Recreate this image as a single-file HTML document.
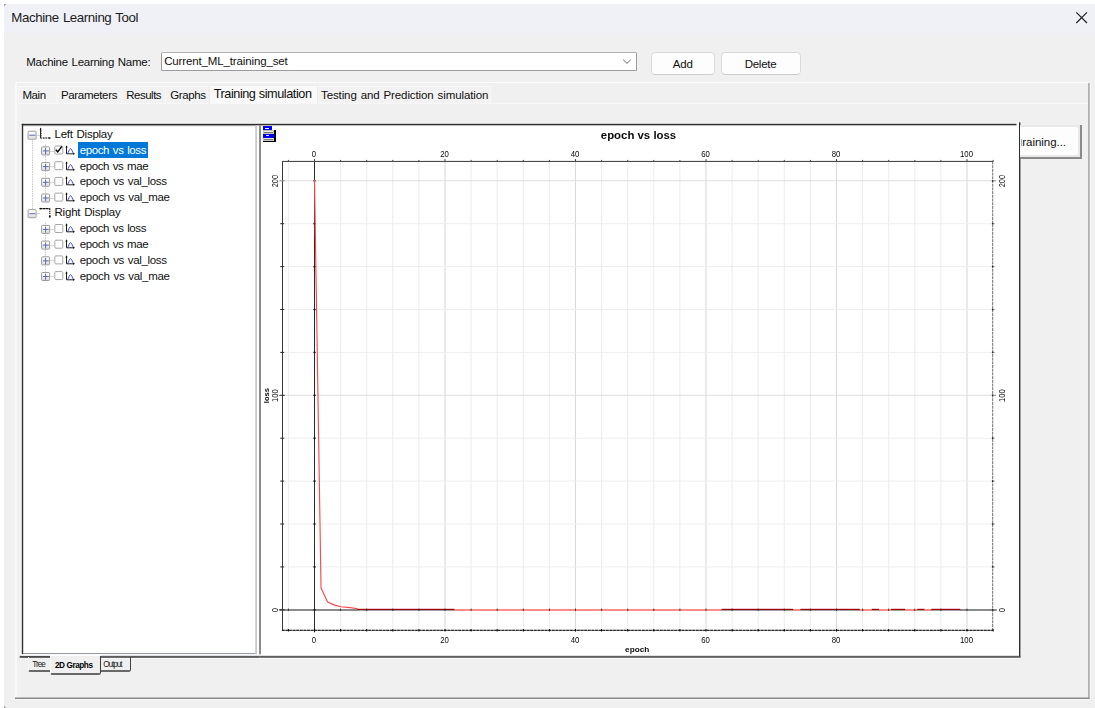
<!DOCTYPE html>
<html><head><meta charset="utf-8"><title>Machine Learning Tool</title>
<style>
html,body{margin:0;padding:0;background:#fff;}
body{width:1095px;height:708px;position:relative;overflow:hidden;font-family:"Liberation Sans",sans-serif;}
.a{position:absolute;}
.t{position:absolute;white-space:pre;line-height:1;}
.win{position:absolute;left:4px;top:4px;width:1091px;height:704px;background:#f0f0f0;border-radius:0;}
.title{position:absolute;left:4px;top:4px;width:1091px;height:29px;background:#f0f1f7;}
.btn{position:absolute;background:#fdfdfd;border:1px solid #d9d9d9;border-bottom-color:#cccccc;border-radius:4.5px;box-sizing:border-box;}
.tab{position:absolute;top:86px;height:17px;box-sizing:border-box;border:1px solid #f8f8f8;border-bottom:none;background:#f2f2f2;}
.xb{position:absolute;width:9px;height:9px;box-sizing:border-box;border:1px solid #9b9b9b;border-radius:1.2px;background:linear-gradient(#ffffff 0%,#f4f4f4 50%,#dcdcdc 100%);}
.cb{position:absolute;width:9px;height:9px;box-sizing:border-box;border:1px solid #a6a6a6;border-radius:1.5px;background:#fff;}
</style></head><body>
<div class="win"></div>
<div class="title"></div>
<div class="t" style="left:11.30px;top:10.64px;font-size:13.3px;letter-spacing:-0.409px;color:#1b1b1b;word-spacing:0.9px;">Machine Learning Tool</div><svg class="a" style="left:1074px;top:10px" width="16" height="16" viewBox="0 0 16 16"><path d="M2.3 2.3 L13 13 M13 2.3 L2.3 13" stroke="#1f1f1f" stroke-width="1.15" fill="none"/></svg><div class="t" style="left:26.30px;top:57.37px;font-size:11.5px;letter-spacing:-0.286px;color:#101010;word-spacing:0.9px;">Machine Learning Name:</div><div class="a" style="left:161px;top:52px;width:476px;height:19px;box-sizing:border-box;background:#fff;border:1px solid #9c9c9c;border-top-color:#b2b2b2;border-radius:1.5px;"></div><div class="t" style="left:164.20px;top:55.67px;font-size:11.5px;letter-spacing:-0.138px;color:#101010;">Current_ML_training_set</div><svg class="a" style="left:621px;top:56px" width="12" height="10" viewBox="0 0 12 10"><path d="M2.2 3.7 L6 7.4 L9.8 3.7" stroke="#5c5c5c" stroke-width="0.95" fill="none"/></svg><div class="btn" style="left:650.5px;top:52px;width:64px;height:22.6px;"></div><div class="t" style="left:672.70px;top:58.87px;font-size:11.5px;letter-spacing:-0.121px;color:#101010;">Add</div><div class="btn" style="left:721px;top:52px;width:79.5px;height:22.6px;"></div><div class="t" style="left:744.70px;top:58.87px;font-size:11.5px;letter-spacing:-0.257px;color:#101010;">Delete</div><div class="a" style="left:15px;top:82px;width:1074px;height:1px;background:#fbfbfb;"></div><div class="a" style="left:15px;top:82px;width:2px;height:617px;background:#f9f9f9;"></div><div class="a" style="left:17px;top:103px;width:1071px;height:1px;background:#f7f7f7;"></div><div class="tab" style="left:18px;width:39.3px;"></div><div class="t" style="left:22.40px;top:89.87px;font-size:11.5px;letter-spacing:-0.407px;color:#101010;">Main</div><div class="tab" style="left:56.3px;width:65.7px;"></div><div class="t" style="left:60.90px;top:89.87px;font-size:11.5px;letter-spacing:-0.324px;color:#101010;">Parameters</div><div class="tab" style="left:121px;width:45.30000000000001px;"></div><div class="t" style="left:126.20px;top:89.87px;font-size:11.5px;letter-spacing:-0.492px;color:#101010;">Results</div><div class="tab" style="left:165.3px;width:44.69999999999999px;"></div><div class="t" style="left:170.20px;top:89.87px;font-size:11.5px;letter-spacing:-0.385px;color:#101010;">Graphs</div><div class="tab" style="left:317px;width:174px;"></div><div class="t" style="left:321.00px;top:89.87px;font-size:11.5px;letter-spacing:-0.107px;color:#101010;word-spacing:0.9px;">Testing and Prediction simulation</div><div class="tab" style="left:209px;top:84.5px;width:108.5px;height:19.5px;background:#f9f9f9;border-color:#ececec;"></div><div class="t" style="left:213.70px;top:87.85px;font-size:12.7px;letter-spacing:-0.448px;color:#101010;word-spacing:0.3px;">Training simulation</div><div class="a" style="left:21px;top:124px;width:236px;height:530px;background:#fff;"></div><div class="a" style="left:257px;top:124px;width:762px;height:532px;background:#fff;"></div><svg class="a" style="left:0;top:0" width="1095" height="708" viewBox="0 0 1095 708"><rect x="20.3" y="122.6" width="998.5" height="1.2" fill="#f9f9f9"/><rect x="20.3" y="122.6" width="1.4" height="533" fill="#f9f9f9"/><rect x="21.7" y="123.8" width="994.8" height="1.5" fill="#2e2e2e"/><rect x="23" y="125.3" width="234" height="0.8" fill="#8a8a8a"/><rect x="21.8" y="123.8" width="1.4" height="530.4" fill="#2e2e2e"/><rect x="23" y="653.1" width="233.8" height="1.1" fill="#8c929c"/><rect x="21" y="654.2" width="238" height="1.8" fill="#ffffff"/><rect x="255.2" y="125.3" width="1.8" height="528.8" fill="#c6c9d2"/><rect x="259.0" y="125.3" width="2.0" height="529" fill="#8c8c8c"/><rect x="1019.0" y="122.4" width="1.4" height="535" fill="#2e2e2e"/><rect x="259.2" y="655.8" width="761.2" height="2.1" fill="#5e5e5e"/><rect x="101" y="657.9" width="919" height="1.0" fill="#f8f8f8"/><rect x="1088.4" y="83" width="1.3" height="616" fill="#8a8a8a"/><rect x="15" y="697.5" width="1074.7" height="1.6" fill="#8a8a8a"/><rect x="15" y="699.1" width="1075.7" height="1.0" fill="#f7f7f7"/><rect x="1089.7" y="83" width="1.0" height="617" fill="#f7f7f7"/><path d="M4 4H6.6L4 6.6Z" fill="#a4a4a4"/><path d="M4 708V705.4L6.2 708Z" fill="#a4a4a4"/><rect x="19.7" y="655.9" width="30.6" height="1.9" fill="#484848"/><rect x="100.8" y="655.8" width="158.4" height="2.1" fill="#5e5e5e"/></svg><svg class="a" style="left:31px;top:0" width="3" height="708"><line x1="1.5" y1="140.30" x2="1.5" y2="209.80" stroke="#cacaca" stroke-width="1" stroke-dasharray="1.5 0.9"/></svg><svg class="a" style="left:44px;top:0" width="3" height="708"><line x1="1.5" y1="144.30" x2="1.5" y2="198.10" stroke="#cacaca" stroke-width="1" stroke-dasharray="1.5 0.9"/></svg><svg class="a" style="left:44px;top:0" width="3" height="708"><line x1="1.5" y1="222.80" x2="1.5" y2="276.60" stroke="#cacaca" stroke-width="1" stroke-dasharray="1.5 0.9"/></svg><div class="a" style="left:37px;top:134.80px;width:3px;height:1px;background:#d6d6d6;"></div><div class="xb" style="left:27px;top:130px;transform:translate(0.60px,0.70px);"></div><div class="a" style="left:29px;top:134px;transform:translate(0.30px,0.70px);width:5.6px;height:1px;background:#5a69b2;"></div><svg class="a" style="left:38px;top:127.10px" width="15" height="13" viewBox="0 0 15 13"><path d="M2.6 1.2V11.1" stroke="#111" stroke-width="1" fill="none"/><path d="M2.6 11.1H12" stroke="#111" stroke-width="1" fill="none" stroke-dasharray="1.7 0.7"/><path d="M1.7 2.5L2.6 0.6L3.5 2.5Z M11.1 10.1L13.2 11.1L11.1 12.1Z" fill="#111"/><path d="M3.1 4h.8M3.1 6.4h.8M3.1 8.8h.8" stroke="#222" stroke-width="0.7"/><path d="M5.6 10.2v.5M8 10.2v.5M10.4 10.2v.5" stroke="#222" stroke-width="0.8"/></svg><div class="t" style="left:54.50px;top:128.97px;font-size:11.5px;letter-spacing:-0.249px;color:#101010;word-spacing:0.9px;">Left Display</div><div class="a" style="left:50px;top:150.50px;width:4px;height:1px;background:#d6d6d6;"></div><div class="xb" style="left:41px;top:146px;transform:translate(0.10px,0.40px);"></div><div class="a" style="left:42px;top:150px;transform:translate(0.80px,0.40px);width:5.6px;height:1px;background:#5a69b2;"></div><div class="a" style="left:45px;top:148px;transform:translate(0.10px,0.10px);width:1px;height:5.6px;background:#5a69b2;"></div><div class="cb" style="left:54px;top:145px;transform:translate(0.30px,0.50px);"></div><svg class="a" style="left:54.2px;top:145.30px" width="10" height="10" viewBox="0 0 10 10"><path d="M1.8 4.7L3.7 6.9L7.9 1.4" stroke="#000" stroke-width="1.45" fill="none"/></svg><div class="a" style="left:78px;top:142.10px;width:69.8px;height:15.8px;background:#0078d7;"></div><svg class="a" style="left:64px;top:144.90px" width="12" height="11" viewBox="0 0 12 11"><path d="M3.4 8.4 C4.6 7.6 5.4 3.6 6.6 3.6 C7.8 3.6 8.4 7.4 9.4 8.2" stroke="#3a3aff" stroke-width="0.95" fill="none"/><path d="M2.5 1.2V8.8H10" stroke="#151515" stroke-width="0.95" fill="none"/><path d="M1.35 2.5L2.5 0.3L3.65 2.5Z M9.1 7.75L11.1 8.8L9.1 9.85Z" fill="#111"/></svg><div class="t" style="left:79.70px;top:144.92px;font-size:11.5px;letter-spacing:-0.390px;color:#fff;word-spacing:0.9px;">epoch vs loss</div><div class="a" style="left:50px;top:166.20px;width:4px;height:1px;background:#d6d6d6;"></div><div class="xb" style="left:41px;top:162px;transform:translate(0.10px,0.10px);"></div><div class="a" style="left:42px;top:166px;transform:translate(0.80px,0.10px);width:5.6px;height:1px;background:#5a69b2;"></div><div class="a" style="left:45px;top:163px;transform:translate(0.10px,0.80px);width:1px;height:5.6px;background:#5a69b2;"></div><div class="cb" style="left:54px;top:161px;transform:translate(0.30px,0.20px);"></div><svg class="a" style="left:64px;top:160.60px" width="12" height="11" viewBox="0 0 12 11"><path d="M3.4 8.4 C4.6 7.6 5.4 3.6 6.6 3.6 C7.8 3.6 8.4 7.4 9.4 8.2" stroke="#3a3aff" stroke-width="0.95" fill="none"/><path d="M2.5 1.2V8.8H10" stroke="#151515" stroke-width="0.95" fill="none"/><path d="M1.35 2.5L2.5 0.3L3.65 2.5Z M9.1 7.75L11.1 8.8L9.1 9.85Z" fill="#111"/></svg><div class="t" style="left:79.70px;top:160.62px;font-size:11.5px;letter-spacing:-0.408px;color:#101010;word-spacing:0.9px;">epoch vs mae</div><div class="a" style="left:50px;top:181.90px;width:4px;height:1px;background:#d6d6d6;"></div><div class="xb" style="left:41px;top:177px;transform:translate(0.10px,0.80px);"></div><div class="a" style="left:42px;top:181px;transform:translate(0.80px,0.80px);width:5.6px;height:1px;background:#5a69b2;"></div><div class="a" style="left:45px;top:179px;transform:translate(0.10px,0.50px);width:1px;height:5.6px;background:#5a69b2;"></div><div class="cb" style="left:54px;top:176px;transform:translate(0.30px,0.90px);"></div><svg class="a" style="left:64px;top:176.30px" width="12" height="11" viewBox="0 0 12 11"><path d="M3.4 8.4 C4.6 7.6 5.4 3.6 6.6 3.6 C7.8 3.6 8.4 7.4 9.4 8.2" stroke="#3a3aff" stroke-width="0.95" fill="none"/><path d="M2.5 1.2V8.8H10" stroke="#151515" stroke-width="0.95" fill="none"/><path d="M1.35 2.5L2.5 0.3L3.65 2.5Z M9.1 7.75L11.1 8.8L9.1 9.85Z" fill="#111"/></svg><div class="t" style="left:79.70px;top:176.32px;font-size:11.5px;letter-spacing:-0.328px;color:#101010;word-spacing:0.9px;">epoch vs val_loss</div><div class="a" style="left:50px;top:197.60px;width:4px;height:1px;background:#d6d6d6;"></div><div class="xb" style="left:41px;top:193px;transform:translate(0.10px,0.50px);"></div><div class="a" style="left:42px;top:197px;transform:translate(0.80px,0.50px);width:5.6px;height:1px;background:#5a69b2;"></div><div class="a" style="left:45px;top:195px;transform:translate(0.10px,0.20px);width:1px;height:5.6px;background:#5a69b2;"></div><div class="cb" style="left:54px;top:192px;transform:translate(0.30px,0.60px);"></div><svg class="a" style="left:64px;top:192.00px" width="12" height="11" viewBox="0 0 12 11"><path d="M3.4 8.4 C4.6 7.6 5.4 3.6 6.6 3.6 C7.8 3.6 8.4 7.4 9.4 8.2" stroke="#3a3aff" stroke-width="0.95" fill="none"/><path d="M2.5 1.2V8.8H10" stroke="#151515" stroke-width="0.95" fill="none"/><path d="M1.35 2.5L2.5 0.3L3.65 2.5Z M9.1 7.75L11.1 8.8L9.1 9.85Z" fill="#111"/></svg><div class="t" style="left:79.70px;top:192.02px;font-size:11.5px;letter-spacing:-0.281px;color:#101010;word-spacing:0.9px;">epoch vs val_mae</div><div class="a" style="left:37px;top:213.30px;width:3px;height:1px;background:#d6d6d6;"></div><div class="xb" style="left:27px;top:209px;transform:translate(0.60px,0.20px);"></div><div class="a" style="left:29px;top:213px;transform:translate(0.30px,0.20px);width:5.6px;height:1px;background:#5a69b2;"></div><svg class="a" style="left:38px;top:205.60px" width="15" height="14" viewBox="0 0 15 14"><path d="M2 2.6H11.8" stroke="#111" stroke-width="1.15" fill="none" stroke-dasharray="2.6 0.35"/><path d="M11.8 2.6V10.6" stroke="#111" stroke-width="1.15" fill="none" stroke-dasharray="1.3 0.8"/><circle cx="2.2" cy="2.6" r="0.85" fill="#111"/><circle cx="11.8" cy="10.8" r="1" fill="#111"/></svg><div class="t" style="left:54.50px;top:207.47px;font-size:11.5px;letter-spacing:-0.204px;color:#101010;word-spacing:0.9px;">Right Display</div><div class="a" style="left:50px;top:229.00px;width:4px;height:1px;background:#d6d6d6;"></div><div class="xb" style="left:41px;top:224px;transform:translate(0.10px,0.90px);"></div><div class="a" style="left:42px;top:228px;transform:translate(0.80px,0.90px);width:5.6px;height:1px;background:#5a69b2;"></div><div class="a" style="left:45px;top:226px;transform:translate(0.10px,0.60px);width:1px;height:5.6px;background:#5a69b2;"></div><div class="cb" style="left:54px;top:224px;transform:translate(0.30px,0.00px);"></div><svg class="a" style="left:64px;top:223.40px" width="12" height="11" viewBox="0 0 12 11"><path d="M3.4 8.4 C4.6 7.6 5.4 3.6 6.6 3.6 C7.8 3.6 8.4 7.4 9.4 8.2" stroke="#3a3aff" stroke-width="0.95" fill="none"/><path d="M2.5 1.2V8.8H10" stroke="#151515" stroke-width="0.95" fill="none"/><path d="M1.35 2.5L2.5 0.3L3.65 2.5Z M9.1 7.75L11.1 8.8L9.1 9.85Z" fill="#111"/></svg><div class="t" style="left:79.70px;top:223.42px;font-size:11.5px;letter-spacing:-0.390px;color:#101010;word-spacing:0.9px;">epoch vs loss</div><div class="a" style="left:50px;top:244.70px;width:4px;height:1px;background:#d6d6d6;"></div><div class="xb" style="left:41px;top:240px;transform:translate(0.10px,0.60px);"></div><div class="a" style="left:42px;top:244px;transform:translate(0.80px,0.60px);width:5.6px;height:1px;background:#5a69b2;"></div><div class="a" style="left:45px;top:242px;transform:translate(0.10px,0.30px);width:1px;height:5.6px;background:#5a69b2;"></div><div class="cb" style="left:54px;top:239px;transform:translate(0.30px,0.70px);"></div><svg class="a" style="left:64px;top:239.10px" width="12" height="11" viewBox="0 0 12 11"><path d="M3.4 8.4 C4.6 7.6 5.4 3.6 6.6 3.6 C7.8 3.6 8.4 7.4 9.4 8.2" stroke="#3a3aff" stroke-width="0.95" fill="none"/><path d="M2.5 1.2V8.8H10" stroke="#151515" stroke-width="0.95" fill="none"/><path d="M1.35 2.5L2.5 0.3L3.65 2.5Z M9.1 7.75L11.1 8.8L9.1 9.85Z" fill="#111"/></svg><div class="t" style="left:79.70px;top:239.12px;font-size:11.5px;letter-spacing:-0.408px;color:#101010;word-spacing:0.9px;">epoch vs mae</div><div class="a" style="left:50px;top:260.40px;width:4px;height:1px;background:#d6d6d6;"></div><div class="xb" style="left:41px;top:256px;transform:translate(0.10px,0.30px);"></div><div class="a" style="left:42px;top:260px;transform:translate(0.80px,0.30px);width:5.6px;height:1px;background:#5a69b2;"></div><div class="a" style="left:45px;top:258px;transform:translate(0.10px,0.00px);width:1px;height:5.6px;background:#5a69b2;"></div><div class="cb" style="left:54px;top:255px;transform:translate(0.30px,0.40px);"></div><svg class="a" style="left:64px;top:254.80px" width="12" height="11" viewBox="0 0 12 11"><path d="M3.4 8.4 C4.6 7.6 5.4 3.6 6.6 3.6 C7.8 3.6 8.4 7.4 9.4 8.2" stroke="#3a3aff" stroke-width="0.95" fill="none"/><path d="M2.5 1.2V8.8H10" stroke="#151515" stroke-width="0.95" fill="none"/><path d="M1.35 2.5L2.5 0.3L3.65 2.5Z M9.1 7.75L11.1 8.8L9.1 9.85Z" fill="#111"/></svg><div class="t" style="left:79.70px;top:254.82px;font-size:11.5px;letter-spacing:-0.328px;color:#101010;word-spacing:0.9px;">epoch vs val_loss</div><div class="a" style="left:50px;top:276.10px;width:4px;height:1px;background:#d6d6d6;"></div><div class="xb" style="left:41px;top:272px;transform:translate(0.10px,0.00px);"></div><div class="a" style="left:42px;top:276px;transform:translate(0.80px,0.00px);width:5.6px;height:1px;background:#5a69b2;"></div><div class="a" style="left:45px;top:273px;transform:translate(0.10px,0.70px);width:1px;height:5.6px;background:#5a69b2;"></div><div class="cb" style="left:54px;top:271px;transform:translate(0.30px,0.10px);"></div><svg class="a" style="left:64px;top:270.50px" width="12" height="11" viewBox="0 0 12 11"><path d="M3.4 8.4 C4.6 7.6 5.4 3.6 6.6 3.6 C7.8 3.6 8.4 7.4 9.4 8.2" stroke="#3a3aff" stroke-width="0.95" fill="none"/><path d="M2.5 1.2V8.8H10" stroke="#151515" stroke-width="0.95" fill="none"/><path d="M1.35 2.5L2.5 0.3L3.65 2.5Z M9.1 7.75L11.1 8.8L9.1 9.85Z" fill="#111"/></svg><div class="t" style="left:79.70px;top:270.52px;font-size:11.5px;letter-spacing:-0.281px;color:#101010;word-spacing:0.9px;">epoch vs val_mae</div><div class="a" style="left:28.4px;top:657px;width:22px;height:14.6px;box-sizing:border-box;border:1px solid #f8f8f8;border-top:none;border-bottom:2px solid #686868;border-right:none;border-radius:0 0 0 2px;"></div><div class="a" style="left:50px;top:656px;width:51px;height:18.6px;box-sizing:border-box;border-left:1px solid #fafafa;border-bottom:2px solid #686868;border-right:1.5px solid #3a3a3a;border-radius:0 0 2.5px 2.5px;background:#f0f0f0;"></div><div class="a" style="left:101px;top:657px;width:29.6px;height:14.8px;box-sizing:border-box;border-bottom:2px solid #686868;border-right:1.5px solid #444;border-radius:0 0 2.5px 0;"></div><div class="t" style="left:32.20px;top:661.46px;font-size:8.2px;letter-spacing:-0.939px;color:#222;">Tree</div><div class="t" style="left:55.00px;top:661.66px;font-size:8.2px;letter-spacing:-0.430px;font-weight:700;color:#000;word-spacing:0px;">2D Graphs</div><div class="t" style="left:103.20px;top:661.46px;font-size:8.2px;letter-spacing:-1.036px;color:#222;">Output</div><div class="a" style="left:1020.3px;top:124.6px;width:61.6px;height:34px;background:#8a8a8a;"></div><div class="a" style="left:1020.3px;top:124.6px;width:59.6px;height:32px;background:#e9e9e9;"></div><div class="a" style="left:1020.3px;top:127.3px;width:58px;height:28px;background:#fdfdfd;border-radius:0 2px 2px 0;"></div><div class="t" style="left:1022.30px;top:136.57px;font-size:11.5px;letter-spacing:-0.041px;color:#101010;">raining...</div><div class="a" style="left:1020.6px;top:139px;width:0.9px;height:6.6px;background:#86b8ea;"></div><svg class="a" style="left:0;top:0;will-change:transform" width="1095" height="708" viewBox="0 0 1095 708" font-family="Liberation Sans, sans-serif"><g shape-rendering="crispEdges"><rect x="263.2" y="126.3" width="8.6" height="4" fill="#0000f0"/><rect x="265" y="127.8" width="4" height="1.1" fill="#fff"/><rect x="263.4" y="130.2" width="12.2" height="11.7" fill="#000"/><rect x="263.4" y="130.2" width="10.7" height="10.6" fill="#c6c6c0"/><rect x="264.2" y="131.7" width="9" height="1" fill="#7a7a7a"/><rect x="264.2" y="130.6" width="9" height="0.9" fill="#ecece0"/><rect x="263.2" y="133.7" width="10.9" height="4.2" fill="#0000f5"/><rect x="265.6" y="135.4" width="3.4" height="1" fill="#e8e8ff"/><rect x="264.2" y="139.3" width="9" height="1" fill="#7a7a7a"/><rect x="264.2" y="138.2" width="9" height="0.9" fill="#ecece0"/></g><g><line x1="288.40" y1="161.5" x2="288.40" y2="630.3" stroke="#ececec" stroke-width="1.0"/><line x1="340.60" y1="161.5" x2="340.60" y2="630.3" stroke="#ececec" stroke-width="1.0"/><line x1="366.70" y1="161.5" x2="366.70" y2="630.3" stroke="#ececec" stroke-width="1.0"/><line x1="392.80" y1="161.5" x2="392.80" y2="630.3" stroke="#ececec" stroke-width="1.0"/><line x1="418.90" y1="161.5" x2="418.90" y2="630.3" stroke="#ececec" stroke-width="1.0"/><line x1="445.00" y1="161.5" x2="445.00" y2="630.3" stroke="#d9d9d9" stroke-width="1.1"/><line x1="471.10" y1="161.5" x2="471.10" y2="630.3" stroke="#ececec" stroke-width="1.0"/><line x1="497.20" y1="161.5" x2="497.20" y2="630.3" stroke="#ececec" stroke-width="1.0"/><line x1="523.30" y1="161.5" x2="523.30" y2="630.3" stroke="#ececec" stroke-width="1.0"/><line x1="549.40" y1="161.5" x2="549.40" y2="630.3" stroke="#ececec" stroke-width="1.0"/><line x1="575.50" y1="161.5" x2="575.50" y2="630.3" stroke="#d9d9d9" stroke-width="1.1"/><line x1="601.60" y1="161.5" x2="601.60" y2="630.3" stroke="#ececec" stroke-width="1.0"/><line x1="627.70" y1="161.5" x2="627.70" y2="630.3" stroke="#ececec" stroke-width="1.0"/><line x1="653.80" y1="161.5" x2="653.80" y2="630.3" stroke="#ececec" stroke-width="1.0"/><line x1="679.90" y1="161.5" x2="679.90" y2="630.3" stroke="#ececec" stroke-width="1.0"/><line x1="706.00" y1="161.5" x2="706.00" y2="630.3" stroke="#d9d9d9" stroke-width="1.1"/><line x1="732.10" y1="161.5" x2="732.10" y2="630.3" stroke="#ececec" stroke-width="1.0"/><line x1="758.20" y1="161.5" x2="758.20" y2="630.3" stroke="#ececec" stroke-width="1.0"/><line x1="784.30" y1="161.5" x2="784.30" y2="630.3" stroke="#ececec" stroke-width="1.0"/><line x1="810.40" y1="161.5" x2="810.40" y2="630.3" stroke="#ececec" stroke-width="1.0"/><line x1="836.50" y1="161.5" x2="836.50" y2="630.3" stroke="#d9d9d9" stroke-width="1.1"/><line x1="862.60" y1="161.5" x2="862.60" y2="630.3" stroke="#ececec" stroke-width="1.0"/><line x1="888.70" y1="161.5" x2="888.70" y2="630.3" stroke="#ececec" stroke-width="1.0"/><line x1="914.80" y1="161.5" x2="914.80" y2="630.3" stroke="#ececec" stroke-width="1.0"/><line x1="940.90" y1="161.5" x2="940.90" y2="630.3" stroke="#ececec" stroke-width="1.0"/><line x1="967.00" y1="161.5" x2="967.00" y2="630.3" stroke="#d9d9d9" stroke-width="1.1"/><line x1="282.5" y1="566.90" x2="992.7" y2="566.90" stroke="#eeeeee" stroke-width="1.0"/><line x1="282.5" y1="524.00" x2="992.7" y2="524.00" stroke="#eeeeee" stroke-width="1.0"/><line x1="282.5" y1="481.10" x2="992.7" y2="481.10" stroke="#eeeeee" stroke-width="1.0"/><line x1="282.5" y1="438.20" x2="992.7" y2="438.20" stroke="#eeeeee" stroke-width="1.0"/><line x1="282.5" y1="395.30" x2="992.7" y2="395.30" stroke="#dedede" stroke-width="1.1"/><line x1="282.5" y1="352.40" x2="992.7" y2="352.40" stroke="#eeeeee" stroke-width="1.0"/><line x1="282.5" y1="309.50" x2="992.7" y2="309.50" stroke="#eeeeee" stroke-width="1.0"/><line x1="282.5" y1="266.60" x2="992.7" y2="266.60" stroke="#eeeeee" stroke-width="1.0"/><line x1="282.5" y1="223.70" x2="992.7" y2="223.70" stroke="#eeeeee" stroke-width="1.0"/><line x1="282.5" y1="180.80" x2="992.7" y2="180.80" stroke="#dedede" stroke-width="1.1"/></g><rect x="279.3" y="609" width="717.4" height="2" fill="#8c8c8c"/><rect x="314" y="159.2" width="1" height="473.1" fill="#2a2a2a"/><rect x="282" y="161.0" width="1" height="469.8" fill="#383838"/><rect x="282" y="160.9" width="711.2" height="1.1" fill="#4a4a4a"/><line x1="282" y1="630.3" x2="993.2" y2="630.3" stroke="#555" stroke-width="0.85"/><line x1="282" y1="630.3" x2="993.2" y2="630.3" stroke="#000" stroke-width="0.85" stroke-dasharray="2.6 1"/><line x1="992.7" y1="161.5" x2="992.7" y2="630.3" stroke="#484848" stroke-width="0.8" stroke-dasharray="3 0.7"/><rect x="287.90" y="159.90" width="1" height="1.6" fill="#444"/><rect x="287.90" y="629.00" width="1" height="2.5" fill="#000"/><rect x="314.00" y="159.10" width="1" height="2.4" fill="#444"/><rect x="314.00" y="629.00" width="1" height="2.5" fill="#000"/><rect x="340.10" y="159.90" width="1" height="1.6" fill="#444"/><rect x="340.10" y="629.00" width="1" height="2.5" fill="#000"/><rect x="366.20" y="159.90" width="1" height="1.6" fill="#444"/><rect x="366.20" y="629.00" width="1" height="2.5" fill="#000"/><rect x="392.30" y="159.90" width="1" height="1.6" fill="#444"/><rect x="392.30" y="629.00" width="1" height="2.5" fill="#000"/><rect x="418.40" y="159.90" width="1" height="1.6" fill="#444"/><rect x="418.40" y="629.00" width="1" height="2.5" fill="#000"/><rect x="444.50" y="159.10" width="1" height="2.4" fill="#444"/><rect x="444.50" y="629.00" width="1" height="2.5" fill="#000"/><rect x="470.60" y="159.90" width="1" height="1.6" fill="#444"/><rect x="470.60" y="629.00" width="1" height="2.5" fill="#000"/><rect x="496.70" y="159.90" width="1" height="1.6" fill="#444"/><rect x="496.70" y="629.00" width="1" height="2.5" fill="#000"/><rect x="522.80" y="159.90" width="1" height="1.6" fill="#444"/><rect x="522.80" y="629.00" width="1" height="2.5" fill="#000"/><rect x="548.90" y="159.90" width="1" height="1.6" fill="#444"/><rect x="548.90" y="629.00" width="1" height="2.5" fill="#000"/><rect x="575.00" y="159.10" width="1" height="2.4" fill="#444"/><rect x="575.00" y="629.00" width="1" height="2.5" fill="#000"/><rect x="601.10" y="159.90" width="1" height="1.6" fill="#444"/><rect x="601.10" y="629.00" width="1" height="2.5" fill="#000"/><rect x="627.20" y="159.90" width="1" height="1.6" fill="#444"/><rect x="627.20" y="629.00" width="1" height="2.5" fill="#000"/><rect x="653.30" y="159.90" width="1" height="1.6" fill="#444"/><rect x="653.30" y="629.00" width="1" height="2.5" fill="#000"/><rect x="679.40" y="159.90" width="1" height="1.6" fill="#444"/><rect x="679.40" y="629.00" width="1" height="2.5" fill="#000"/><rect x="705.50" y="159.10" width="1" height="2.4" fill="#444"/><rect x="705.50" y="629.00" width="1" height="2.5" fill="#000"/><rect x="731.60" y="159.90" width="1" height="1.6" fill="#444"/><rect x="731.60" y="629.00" width="1" height="2.5" fill="#000"/><rect x="757.70" y="159.90" width="1" height="1.6" fill="#444"/><rect x="757.70" y="629.00" width="1" height="2.5" fill="#000"/><rect x="783.80" y="159.90" width="1" height="1.6" fill="#444"/><rect x="783.80" y="629.00" width="1" height="2.5" fill="#000"/><rect x="809.90" y="159.90" width="1" height="1.6" fill="#444"/><rect x="809.90" y="629.00" width="1" height="2.5" fill="#000"/><rect x="836.00" y="159.10" width="1" height="2.4" fill="#444"/><rect x="836.00" y="629.00" width="1" height="2.5" fill="#000"/><rect x="862.10" y="159.90" width="1" height="1.6" fill="#444"/><rect x="862.10" y="629.00" width="1" height="2.5" fill="#000"/><rect x="888.20" y="159.90" width="1" height="1.6" fill="#444"/><rect x="888.20" y="629.00" width="1" height="2.5" fill="#000"/><rect x="914.30" y="159.90" width="1" height="1.6" fill="#444"/><rect x="914.30" y="629.00" width="1" height="2.5" fill="#000"/><rect x="940.40" y="159.90" width="1" height="1.6" fill="#444"/><rect x="940.40" y="629.00" width="1" height="2.5" fill="#000"/><rect x="966.50" y="159.10" width="1" height="2.4" fill="#444"/><rect x="966.50" y="629.00" width="1" height="2.5" fill="#000"/><rect x="992.60" y="159.90" width="1" height="1.6" fill="#444"/><rect x="992.60" y="629.00" width="1" height="2.5" fill="#000"/><rect x="279.4" y="609.30" width="5.4" height="1" fill="#2a2a2a"/><rect x="313.4" y="609.10" width="2.2" height="1.4" fill="#111"/><rect x="991.90" y="609.05" width="1.6" height="1.5" fill="#222"/><rect x="993.50" y="609.30" width="2.6" height="1" fill="#8a8a8a"/><rect x="280.2" y="566.40" width="3.9" height="1" fill="#2a2a2a"/><rect x="313.4" y="566.20" width="2.2" height="1.4" fill="#111"/><rect x="991.90" y="566.15" width="1.6" height="1.5" fill="#222"/><rect x="993.50" y="566.40" width="1.2" height="1" fill="#8a8a8a"/><rect x="280.2" y="523.50" width="3.9" height="1" fill="#2a2a2a"/><rect x="313.4" y="523.30" width="2.2" height="1.4" fill="#111"/><rect x="991.90" y="523.25" width="1.6" height="1.5" fill="#222"/><rect x="993.50" y="523.50" width="1.2" height="1" fill="#8a8a8a"/><rect x="280.2" y="480.60" width="3.9" height="1" fill="#2a2a2a"/><rect x="313.4" y="480.40" width="2.2" height="1.4" fill="#111"/><rect x="991.90" y="480.35" width="1.6" height="1.5" fill="#222"/><rect x="993.50" y="480.60" width="1.2" height="1" fill="#8a8a8a"/><rect x="280.2" y="437.70" width="3.9" height="1" fill="#2a2a2a"/><rect x="313.4" y="437.50" width="2.2" height="1.4" fill="#111"/><rect x="991.90" y="437.45" width="1.6" height="1.5" fill="#222"/><rect x="993.50" y="437.70" width="1.2" height="1" fill="#8a8a8a"/><rect x="279.4" y="394.80" width="5.4" height="1" fill="#2a2a2a"/><rect x="313.4" y="394.60" width="2.2" height="1.4" fill="#111"/><rect x="991.90" y="394.55" width="1.6" height="1.5" fill="#222"/><rect x="993.50" y="394.80" width="2.6" height="1" fill="#8a8a8a"/><rect x="280.2" y="351.90" width="3.9" height="1" fill="#2a2a2a"/><rect x="313.4" y="351.70" width="2.2" height="1.4" fill="#111"/><rect x="991.90" y="351.65" width="1.6" height="1.5" fill="#222"/><rect x="993.50" y="351.90" width="1.2" height="1" fill="#8a8a8a"/><rect x="280.2" y="309.00" width="3.9" height="1" fill="#2a2a2a"/><rect x="313.4" y="308.80" width="2.2" height="1.4" fill="#111"/><rect x="991.90" y="308.75" width="1.6" height="1.5" fill="#222"/><rect x="993.50" y="309.00" width="1.2" height="1" fill="#8a8a8a"/><rect x="280.2" y="266.10" width="3.9" height="1" fill="#2a2a2a"/><rect x="313.4" y="265.90" width="2.2" height="1.4" fill="#111"/><rect x="991.90" y="265.85" width="1.6" height="1.5" fill="#222"/><rect x="993.50" y="266.10" width="1.2" height="1" fill="#8a8a8a"/><rect x="280.2" y="223.20" width="3.9" height="1" fill="#2a2a2a"/><rect x="313.4" y="223.00" width="2.2" height="1.4" fill="#111"/><rect x="991.90" y="222.95" width="1.6" height="1.5" fill="#222"/><rect x="993.50" y="223.20" width="1.2" height="1" fill="#8a8a8a"/><rect x="279.4" y="180.30" width="5.4" height="1" fill="#8a8a8a"/><rect x="313.4" y="180.10" width="2.2" height="1.4" fill="#111"/><rect x="991.90" y="180.05" width="1.6" height="1.5" fill="#222"/><rect x="993.50" y="180.30" width="2.6" height="1" fill="#8a8a8a"/><path d="M314.50 179.73 L321.02 587.92 L327.55 602.08 L334.07 604.87 L340.60 606.80 L350.39 607.65 L357.56 608.73" stroke="#ff4848" stroke-width="1.15" fill="none" stroke-linejoin="round"/><rect x="357.1" y="608.8" width="97.4" height="1.45" fill="#a00000"/><rect x="357.1" y="610.25" width="97.4" height="0.75" fill="#a9b3b3"/><rect x="454.5" y="609" width="267.2" height="2" fill="#ff8a8a"/><rect x="721.7" y="608.8" width="71.6" height="1.45" fill="#a00000"/><rect x="721.7" y="610.25" width="71.6" height="0.75" fill="#a9b3b3"/><rect x="793.3" y="609" width="7.2" height="2" fill="#ff8a8a"/><rect x="800.5" y="608.8" width="59.3" height="1.45" fill="#a00000"/><rect x="800.5" y="610.25" width="59.3" height="0.75" fill="#a9b3b3"/><rect x="859.8" y="609" width="12.0" height="2" fill="#ff8a8a"/><rect x="871.8" y="608.8" width="7.2" height="1.45" fill="#a00000"/><rect x="871.8" y="610.25" width="7.2" height="0.75" fill="#a9b3b3"/><rect x="879" y="609" width="12.0" height="2" fill="#ff8a8a"/><rect x="891" y="608.8" width="14.0" height="1.45" fill="#a00000"/><rect x="891" y="610.25" width="14.0" height="0.75" fill="#a9b3b3"/><rect x="905" y="609" width="12.3" height="2" fill="#ff8a8a"/><rect x="917.3" y="608.8" width="7.2" height="1.45" fill="#a00000"/><rect x="917.3" y="610.25" width="7.2" height="0.75" fill="#a9b3b3"/><rect x="924.5" y="609" width="6.9" height="2" fill="#ff8a8a"/><rect x="931.4" y="608.8" width="28.9" height="1.45" fill="#a00000"/><rect x="931.4" y="610.25" width="28.9" height="0.75" fill="#a9b3b3"/><rect x="287.90" y="608.6" width="1" height="2.4" fill="#1a1a1a" opacity="0.8"/><rect x="340.10" y="608.6" width="1" height="2.4" fill="#1a1a1a" opacity="0.8"/><rect x="366.20" y="608.6" width="1" height="2.4" fill="#1a1a1a" opacity="0.8"/><rect x="392.30" y="608.6" width="1" height="2.4" fill="#1a1a1a" opacity="0.8"/><rect x="418.40" y="608.6" width="1" height="2.4" fill="#1a1a1a" opacity="0.8"/><rect x="444.50" y="608.6" width="1" height="2.4" fill="#1a1a1a" opacity="0.8"/><rect x="470.60" y="608.6" width="1" height="2.4" fill="#1a1a1a" opacity="0.8"/><rect x="496.70" y="608.6" width="1" height="2.4" fill="#1a1a1a" opacity="0.8"/><rect x="522.80" y="608.6" width="1" height="2.4" fill="#1a1a1a" opacity="0.8"/><rect x="548.90" y="608.6" width="1" height="2.4" fill="#1a1a1a" opacity="0.8"/><rect x="575.00" y="608.6" width="1" height="2.4" fill="#1a1a1a" opacity="0.8"/><rect x="601.10" y="608.6" width="1" height="2.4" fill="#1a1a1a" opacity="0.8"/><rect x="627.20" y="608.6" width="1" height="2.4" fill="#1a1a1a" opacity="0.8"/><rect x="653.30" y="608.6" width="1" height="2.4" fill="#1a1a1a" opacity="0.8"/><rect x="679.40" y="608.6" width="1" height="2.4" fill="#1a1a1a" opacity="0.8"/><rect x="705.50" y="608.6" width="1" height="2.4" fill="#1a1a1a" opacity="0.8"/><rect x="731.60" y="608.6" width="1" height="2.4" fill="#1a1a1a" opacity="0.8"/><rect x="757.70" y="608.6" width="1" height="2.4" fill="#1a1a1a" opacity="0.8"/><rect x="783.80" y="608.6" width="1" height="2.4" fill="#1a1a1a" opacity="0.8"/><rect x="809.90" y="608.6" width="1" height="2.4" fill="#1a1a1a" opacity="0.8"/><rect x="836.00" y="608.6" width="1" height="2.4" fill="#1a1a1a" opacity="0.8"/><rect x="862.10" y="608.6" width="1" height="2.4" fill="#1a1a1a" opacity="0.8"/><rect x="888.20" y="608.6" width="1" height="2.4" fill="#1a1a1a" opacity="0.8"/><rect x="914.30" y="608.6" width="1" height="2.4" fill="#1a1a1a" opacity="0.8"/><rect x="940.40" y="608.6" width="1" height="2.4" fill="#1a1a1a" opacity="0.8"/><rect x="966.50" y="608.6" width="1" height="2.4" fill="#1a1a1a" opacity="0.8"/><text x="314.0" y="157.0" font-size="8.6" text-anchor="middle" fill="#0a0a0a" textLength="4.3" lengthAdjust="spacingAndGlyphs">0</text><text x="314.0" y="642.8" font-size="8.6" text-anchor="middle" fill="#0a0a0a" textLength="4.3" lengthAdjust="spacingAndGlyphs">0</text><text x="444.5" y="157.0" font-size="8.6" text-anchor="middle" fill="#0a0a0a" textLength="8.7" lengthAdjust="spacingAndGlyphs">20</text><text x="444.5" y="642.8" font-size="8.6" text-anchor="middle" fill="#0a0a0a" textLength="8.7" lengthAdjust="spacingAndGlyphs">20</text><text x="575.0" y="157.0" font-size="8.6" text-anchor="middle" fill="#0a0a0a" textLength="8.7" lengthAdjust="spacingAndGlyphs">40</text><text x="575.0" y="642.8" font-size="8.6" text-anchor="middle" fill="#0a0a0a" textLength="8.7" lengthAdjust="spacingAndGlyphs">40</text><text x="705.5" y="157.0" font-size="8.6" text-anchor="middle" fill="#0a0a0a" textLength="8.7" lengthAdjust="spacingAndGlyphs">60</text><text x="705.5" y="642.8" font-size="8.6" text-anchor="middle" fill="#0a0a0a" textLength="8.7" lengthAdjust="spacingAndGlyphs">60</text><text x="836.0" y="157.0" font-size="8.6" text-anchor="middle" fill="#0a0a0a" textLength="8.7" lengthAdjust="spacingAndGlyphs">80</text><text x="836.0" y="642.8" font-size="8.6" text-anchor="middle" fill="#0a0a0a" textLength="8.7" lengthAdjust="spacingAndGlyphs">80</text><text x="966.5" y="157.0" font-size="8.6" text-anchor="middle" fill="#0a0a0a" textLength="13.0" lengthAdjust="spacingAndGlyphs">100</text><text x="966.5" y="642.8" font-size="8.6" text-anchor="middle" fill="#0a0a0a" textLength="13.0" lengthAdjust="spacingAndGlyphs">100</text><text x="278.0" y="610.1" font-size="8.6" text-anchor="middle" fill="#0a0a0a" transform="rotate(-90 278.0 610.1)" textLength="4.3" lengthAdjust="spacingAndGlyphs">0</text><text x="1005.2" y="610.1" font-size="8.6" text-anchor="middle" fill="#0a0a0a" transform="rotate(-90 1005.2 610.1)" textLength="4.3" lengthAdjust="spacingAndGlyphs">0</text><text x="278.0" y="395.6" font-size="8.6" text-anchor="middle" fill="#0a0a0a" transform="rotate(-90 278.0 395.6)" textLength="12.6" lengthAdjust="spacingAndGlyphs">100</text><text x="1005.2" y="395.6" font-size="8.6" text-anchor="middle" fill="#0a0a0a" transform="rotate(-90 1005.2 395.6)" textLength="12.6" lengthAdjust="spacingAndGlyphs">100</text><text x="278.0" y="181.1" font-size="8.6" text-anchor="middle" fill="#0a0a0a" transform="rotate(-90 278.0 181.1)" textLength="12.3" lengthAdjust="spacingAndGlyphs">200</text><text x="1005.2" y="181.1" font-size="8.6" text-anchor="middle" fill="#0a0a0a" transform="rotate(-90 1005.2 181.1)" textLength="12.3" lengthAdjust="spacingAndGlyphs">200</text><text x="268.8" y="395.6" font-size="8" text-anchor="middle" fill="#0a0a0a" transform="rotate(-90 268.8 395.6)" font-weight="700" textLength="15.2" lengthAdjust="spacingAndGlyphs">loss</text><text x="637.2" y="651.5" font-size="8" text-anchor="middle" fill="#0a0a0a" font-weight="700" textLength="24.3" lengthAdjust="spacingAndGlyphs">epoch</text><text x="638.5" y="139.2" font-size="11.4" text-anchor="middle" fill="#0a0a0a" font-weight="700" textLength="75.4" lengthAdjust="spacingAndGlyphs">epoch vs loss</text></svg></body></html>
